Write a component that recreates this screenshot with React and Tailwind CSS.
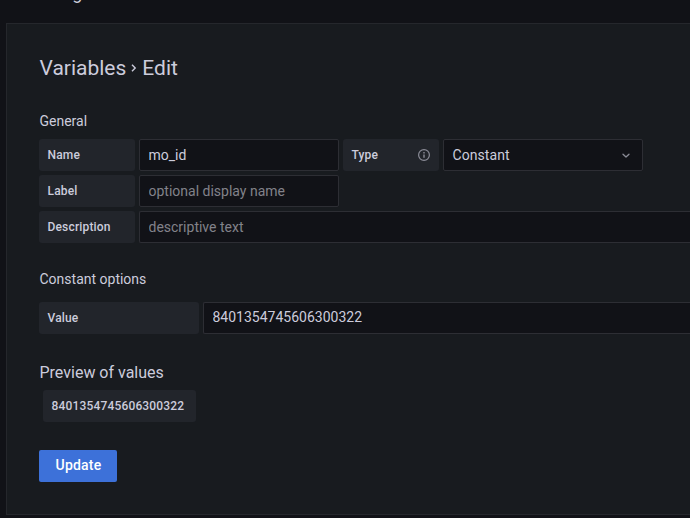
import React from "react";

function Label({ className = "", children }) {
  return (
    <div
      className={`flex h-8 shrink-0 items-center justify-between rounded-[3px] bg-[#22252b] pl-[8.5px] pr-2 text-[12px] font-medium leading-8 tracking-[0.17px] ${className}`}
    >
      {children}
    </div>
  );
}

function Input({ className = "", ...props }) {
  return (
    <input
      className={`h-8 min-w-0 rounded-[2px] border border-[#2d2e34] bg-[#111217] px-[8.5px] text-[14px] text-[#ccccdc] outline-none placeholder:text-[#82828a] ${className}`}
      {...props}
    />
  );
}

function InfoIcon() {
  return (
    <svg className="size-3.5" viewBox="0 0 14 14" fill="none" stroke="#8b8c97">
      <circle cx="7" cy="7" r="5.4" strokeWidth="1.2" />
      <path d="M7 6.5v3.2M7 4.1v1.3" strokeWidth="1.4" />
    </svg>
  );
}

export default function App() {
  return (
    <div className="flex h-[518px] w-[690px] flex-col overflow-hidden bg-[#111217] font-['Roboto','Liberation_Sans',sans-serif] text-[14px] leading-[22px] text-[#ccccdc]">
      <header className="flex h-[23px] shrink-0 pl-[26px]">
        <div className="-mt-[18px] h-[22px] text-[18px] leading-[22px]">Settings</div>
      </header>
      <main className="ml-[6px] flex h-[492px] shrink-0 flex-col border border-r-0 border-[#25272c] bg-[#181b1f] pl-8">
        <h3 className="mt-[30px] flex h-7 items-center pl-[0.5px] text-[21px] leading-7">
          <span>Variables</span>
          <svg className="mx-[3px] size-2.5" viewBox="0 0 10 10" fill="none" stroke="#ccccdc" strokeWidth="1.4">
            <path d="M3 1.8 6.2 5 3 8.2" />
          </svg>
          <span>Edit</span>
        </h3>

        <h5 className="mt-7 h-[22px] pl-[0.5px]">General</h5>
        <div className="mt-[7px] flex flex-col gap-1">
          <div className="flex gap-1">
            <Label className="w-24">Name</Label>
            <Input className="w-[200px]" defaultValue="mo_id" />
            <Label className="w-24">
              Type
              <InfoIcon />
            </Label>
            <div className="flex h-8 w-[200px] items-center justify-between rounded-[2px] border border-[#2d2e34] bg-[#111217] pl-[8.5px] pr-2 tracking-[0.08px]">
              Constant
              <svg className="size-4" viewBox="0 0 16 16" fill="none" stroke="#8b8c97" strokeWidth="1.3" strokeLinecap="round" strokeLinejoin="round">
                <path d="m5 7.2 3 2.8 3-2.8" />
              </svg>
            </div>
          </div>
          <div className="flex gap-1">
            <Label className="w-24">Label</Label>
            <Input className="w-[200px]" placeholder="optional display name" />
          </div>
          <div className="flex gap-1">
            <Label className="w-24">Description</Label>
            <Input className="flex-1 rounded-r-none border-r-0" placeholder="descriptive text" />
          </div>
        </div>

        <h5 className="mt-[25px] h-[22px] pl-[0.5px]">Constant options</h5>
        <div className="mt-3 flex gap-1">
          <Label className="w-40">Value</Label>
          <Input className="flex-1 rounded-r-none border-r-0 pb-0.5" defaultValue="8401354745606300322" />
        </div>

        <h5 className="mt-[28px] h-[22px] pl-[0.5px] text-[16px]">Preview of values</h5>
        <div className="mt-[6px] flex pl-1">
          <Label className="w-[153px]">8401354745606300322</Label>
        </div>

        <button className="mt-7 h-8 w-[78px] rounded-[2px] bg-[#3d71d9] pb-0.5 pl-px text-[14px] font-medium tracking-[0.2px] text-white">
          Update
        </button>
      </main>
    </div>
  );
}
